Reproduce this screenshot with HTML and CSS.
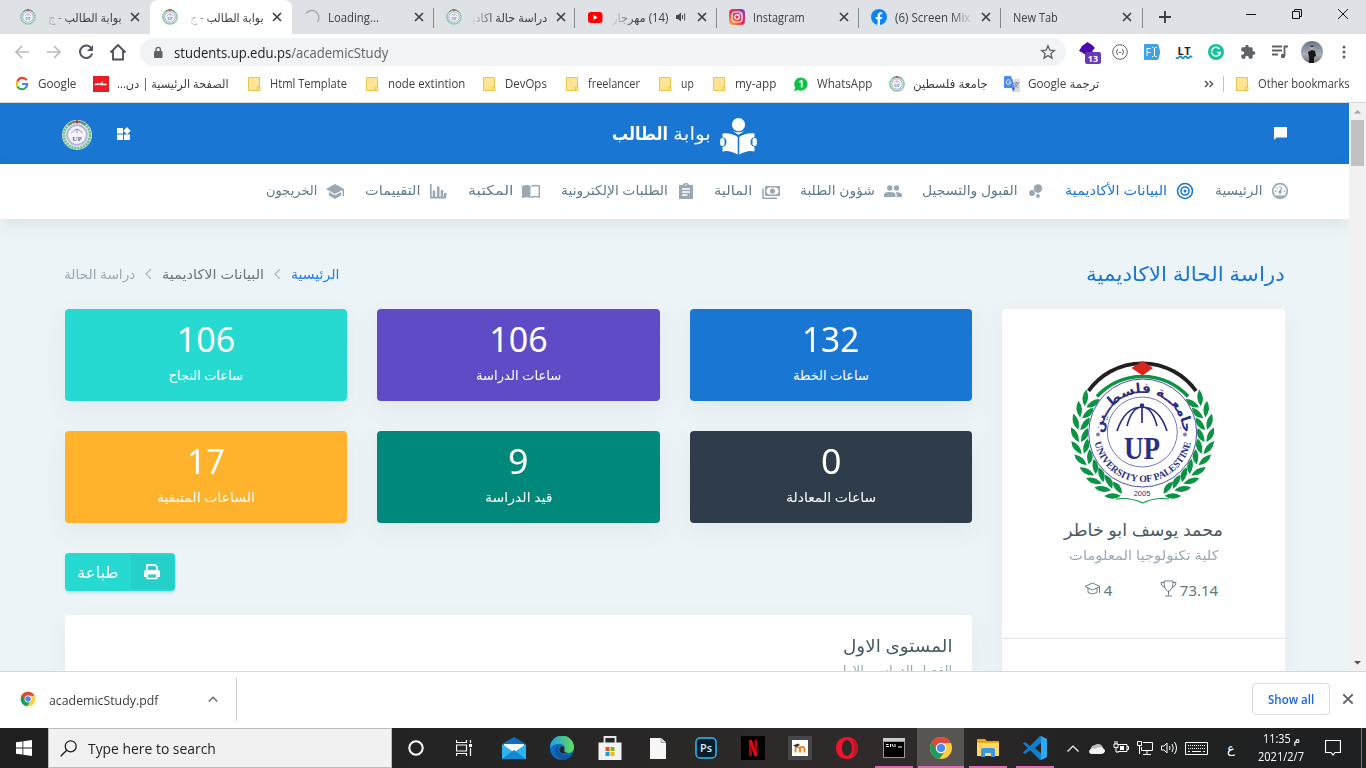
FILE: index.html
```html
<!DOCTYPE html>
<html lang="ar">
<head>
<meta charset="utf-8">
<title>بوابة الطالب</title>
<link rel="stylesheet" href="styles.css">
</head>
<body>
<svg class="defs" width="0" height="0">
  <symbol id="close" viewBox="0 0 12 12"><path d="M2 2l8 8M10 2l-8 8" stroke="currentColor" stroke-width="1.7" fill="none"/></symbol>
  <symbol id="folder" viewBox="0 0 16 16"><path d="M2.500 1.500h11v9.500h.5v3.500h-11.500z" fill="#ffe593" stroke="#e8c64b"/><path d="M11.500 14.500v-3.500h2" fill="none" stroke="#e8c64b"/></symbol>
  <symbol id="mini" viewBox="0 0 32 32"><circle cx="16" cy="16" r="16" fill="#e9edf0"/><circle cx="16" cy="16" r="14" fill="none" stroke="#6fc48c" stroke-width="3" stroke-dasharray="2.500 .7"/><path d="M7 5Q16-2 25 5" fill="none" stroke="#7a7474" stroke-width="2"/><path d="M14 2l2-2 2 2-2 2z" fill="#d4281e"/><circle cx="16" cy="16" r="10.500" fill="#f3f3fa" stroke="#b4b4d8" stroke-width="2"/><path d="M10 14q6-8 12 0M16 9v5" fill="none" stroke="#8a89c0"/><text x="16" y="22" text-anchor="middle" font-family="Liberation Serif" font-weight="bold" font-size="7.500" fill="#6665ad">UP</text></symbol>
  <symbol id="chrome" viewBox="0 0 24 24"><circle cx="12" cy="12" r="11" fill="#ffcd40"/><path d="M12 12L2.500 6.500A11 11 0 0 0 10.500 22.900L16.500 14z" fill="#1a9e5c"/><path d="M2.500 6.500A11 11 0 0 1 21.700 7H12L7.500 14.500z" fill="#db4a3b"/><circle cx="12" cy="12" r="5.200" fill="#fff"/><circle cx="12" cy="12" r="4.100" fill="#4a8af4"/></symbol>
</svg>

<div class="tabs">
  <div class="tab"><svg class="fav"><use href="#mini"/></svg><div class="lab rtl fadel"><span class="fit" dir="rtl" data-w="74">بوابة الطالب - ج</span></div><svg class="x"><use href="#close"/></svg></div>
  <div class="tab active"><svg class="fav"><use href="#mini"/></svg><div class="lab rtl fadel"><span class="fit" dir="rtl" data-w="74">بوابة الطالب - ج</span></div><svg class="x"><use href="#close"/></svg></div>
  <div class="tab sep"><svg class="fav" viewBox="0 0 16 16"><path d="M2 4.500A7 7 0 0 1 13.500 12.700" fill="none" stroke="#a9abad" stroke-width="1.600"/></svg><div class="lab"><span class="fit" data-w="51">Loading...</span></div><svg class="x"><use href="#close"/></svg></div>
  <div class="tab sep"><svg class="fav"><use href="#mini"/></svg><div class="lab rtl fadel"><span class="fit" dir="rtl" data-w="78">دراسة حالة اكاديـ</span></div><svg class="x"><use href="#close"/></svg></div>
  <div class="tab sep"><svg class="fav" viewBox="0 0 16 16"><rect x="1" y="3" width="14.500" height="11" rx="3" fill="#f00"/><path d="M6.500 6v5l4.300-2.500z" fill="#fff"/></svg><div class="lab short rtl fadel"><span class="fit" dir="rtl" data-w="56">(14) مهرجار</span></div><svg class="aud" viewBox="0 0 12 12"><path d="M1 4h2l3-2.500v9L3 8H1z" fill="#45494d"/><path d="M7.500 4v4M9.700 2.500v7" stroke="#45494d" fill="none"/></svg><svg class="x"><use href="#close"/></svg></div>
  <div class="tab sep"><svg class="fav" viewBox="0 0 16 16"><defs><linearGradient id="ig" x1="0" y1="1" x2="1" y2="0"><stop offset="0" stop-color="#fdb945"/><stop offset=".45" stop-color="#ee3344"/><stop offset="1" stop-color="#7b3bd0"/></linearGradient></defs><rect width="16" height="16" rx="4" fill="url(#ig)"/><rect x="3" y="3" width="10" height="10" rx="3" fill="none" stroke="#fff" stroke-width="1.200"/><circle cx="8" cy="8" r="2.300" fill="none" stroke="#fff" stroke-width="1.200"/><circle cx="11" cy="5" r=".7" fill="#fff"/></svg><div class="lab"><span class="fit" data-w="52">Instagram</span></div><svg class="x"><use href="#close"/></svg></div>
  <div class="tab sep"><svg class="fav" viewBox="0 0 16 16"><circle cx="8" cy="8" r="8" fill="#0b84f6"/><path d="M6.700 16v-5.800h-2V8h2V6.200c0-2 1.200-3 3-3l1.600.1v2h-1c-1 0-1.300.5-1.300 1.200V8h2.200l-.4 2.200H9V16z" fill="#fff"/></svg><div class="lab fader"><span class="fit" data-w="75">(6) Screen Mix</span></div><svg class="x"><use href="#close"/></svg></div>
  <div class="tab sep nofav"><div class="lab"><span class="fit" data-w="45">New Tab</span></div><svg class="x"><use href="#close"/></svg></div>
  <svg class="plus" viewBox="0 0 14 14"><path d="M7 1v12M1 7h12" stroke="#3c4043" stroke-width="1.900"/></svg>
  <div class="win">
    <svg viewBox="0 0 12 12"><path d="M1 6.500h10" stroke="#111"/></svg>
    <svg viewBox="0 0 12 12"><path d="M1.500 3.500h7v7h-7zM3.500 3.500v-2h7v7h-2" fill="none" stroke="#111"/></svg>
    <svg viewBox="0 0 12 12"><path d="M1 1l10 10M11 1L1 11" stroke="#111"/></svg>
  </div>
</div>

<div class="toolbar">
  <div class="cell"><svg width="16" height="16" viewBox="0 0 16 16"><path d="M15 8H2M8 2L2 8l6 6" fill="none" stroke="#b8babd" stroke-width="1.700"/></svg></div>
  <div class="cell"><svg width="16" height="16" viewBox="0 0 16 16"><path d="M1 8h13M8 2l6 6-6 6" fill="none" stroke="#b8babd" stroke-width="1.700"/></svg></div>
  <div class="cell"><svg width="16" height="16" viewBox="0 0 16 16"><path d="M13.500 4.500A6.200 6.200 0 1 0 14.200 9.500" fill="none" stroke="#55585c" stroke-width="2"/><path d="M15 1v6H9z" fill="#55585c"/></svg></div>
  <div class="cell"><svg width="18" height="18" viewBox="0 0 18 18"><path d="M1.500 9.500L9 2l7.500 7.500M4 8v8.500h10V8" fill="none" stroke="#4b4e52" stroke-width="1.800"/></svg></div>
  <div class="omni">
    <svg class="lock" viewBox="0 0 10 13"><rect x="1" y="5" width="8.500" height="7" rx="1" fill="#5f6368"/><path d="M3 5V3.500a2.200 2.200 0 0 1 4.400 0V5" fill="none" stroke="#5f6368" stroke-width="1.300"/></svg>
    <span class="fit url" data-w="214">students.up.edu.ps<i>/academicStudy</i></span>
    <svg class="star" viewBox="0 0 16 16"><path d="M8 1.700l1.800 4.400 4.700.4-3.600 3 1.100 4.600L8 11.600l-4 2.500 1.100-4.600-3.600-3 4.700-.4z" fill="none" stroke="#5f6368" stroke-width="1.300"/></svg>
  </div>
  <div class="cell"><svg width="28" height="26" viewBox="0 0 28 26"><path d="M13.500 3l6 4-1 1v7h-9V8L8 7z" fill="#4b0bae"/><path d="M8 7l-3 5 8 4 6-5 2-2-2-2z" fill="#4b0bae"/><rect x="11" y="13" width="16" height="12" rx="2" fill="#673ab7"/><text x="19" y="22.500" text-anchor="middle" font-family="Open Sans" font-size="9" font-weight="bold" fill="#fff">13</text></svg></div>
  <div class="cell"><svg width="16" height="16" viewBox="0 0 16 16"><circle cx="8" cy="8" r="7.300" fill="#fff" stroke="#666"/><path d="M6 5q-1 0-1 2 0 1-1 1 1 0 1 1 0 2 1 2M10 5q1 0 1 2 0 1 1 1-1 0-1 1 0 2-1 2M7 8.500h2" fill="none" stroke="#666"/></svg></div>
  <div class="cell"><svg width="16" height="16" viewBox="0 0 16 16"><path d="M1 0h12q1 0 1.500 1l1.500 6v2l-1.500 6q-.5 1-1.500 1H1q-1 0-1-1V1q0-1 1-1z" fill="#3fa2e6"/><text x="1.500" y="11.500" font-family="Open Sans" font-size="10" fill="#fff">F</text><path d="M8 3.500h1.500l1 1 1-1H13M8 12.500h1.500l1-1 1 1H13M10.500 4v8" fill="none" stroke="#fff"/></svg></div>
  <div class="cell"><svg width="18" height="18" viewBox="0 0 18 18"><text x="2.500" y="11.800" font-family="Open Sans" font-size="11" font-weight="bold" fill="#222" textLength="13">LT</text><path d="M1 14.300q1.500 2 3 0t2.600 0 2.600 0 2.600 0 2.600 0 2.600 0" fill="none" stroke="#1a8ad0" stroke-width="1.800"/></svg></div>
  <div class="cell"><svg width="16" height="16" viewBox="0 0 16 16"><circle cx="8" cy="8" r="8" fill="#15c39a"/><path d="M11.500 5A4.400 4.400 0 1 0 12.300 8.500H9M12.300 8.500l-1 3" fill="none" stroke="#fff" stroke-width="1.400"/></svg></div>
  <div class="cell"><svg width="16" height="16" viewBox="0 0 24 24"><path d="M20.500 11H19V7a2 2 0 0 0-2-2h-4V3.500a2.500 2.500 0 0 0-5 0V5H4a2 2 0 0 0-2 2v3.800h1.500a2.700 2.700 0 0 1 0 5.400H2V20a2 2 0 0 0 2 2h3.800v-1.500a2.700 2.700 0 0 1 5.400 0V22H17a2 2 0 0 0 2-2v-4h1.500a2.500 2.500 0 0 0 0-5z" fill="#5f6368"/></svg></div>
  <div class="cell"><svg width="16" height="14" viewBox="0 0 16 14"><path d="M0 1.500h10M0 5.500h10M0 9.500h6M12.500 11V1.500H16" fill="none" stroke="#5f6368" stroke-width="1.800"/><circle cx="11" cy="11" r="2.200" fill="#5f6368"/></svg></div>
  <div class="cell"><svg width="22" height="22" viewBox="0 0 22 22"><defs><linearGradient id="av" x2="0" y2="1"><stop offset="0" stop-color="#66738c"/><stop offset=".6" stop-color="#aaaeb8"/><stop offset="1" stop-color="#77706d"/></linearGradient></defs><circle cx="11" cy="11" r="11" fill="url(#av)"/><path d="M7 11l4-2 3 1 1 5-2 1v6H8v-6z" fill="#14171f"/><circle cx="11" cy="7" r="1.900" fill="#c9a58d"/><path d="M9 6q2-3 4 0z" fill="#222"/></svg></div>
  <div class="cell"><svg width="4" height="14" viewBox="0 0 4 14"><circle cx="2" cy="2" r="1.500" fill="#5f6368"/><circle cx="2" cy="7" r="1.500" fill="#5f6368"/><circle cx="2" cy="12" r="1.500" fill="#5f6368"/></svg></div>
</div>

<div class="marks">
  <div class="bm"><svg viewBox="0 0 16 16"><path d="M12.700 4.200A5.200 5.200 0 0 0 3.400 5.600" fill="none" stroke="#ea4335" stroke-width="2.200"/><path d="M3.400 5.600a5.200 5.200 0 0 0 0 4.800" fill="none" stroke="#fbbc05" stroke-width="2.200"/><path d="M3.400 10.400a5.200 5.200 0 0 0 8 1.600" fill="none" stroke="#34a853" stroke-width="2.200"/><path d="M8 8h5.200a5.200 5.200 0 0 1-1.800 4" fill="none" stroke="#4285f4" stroke-width="2.200"/></svg><span class="fit" data-w="38">Google</span></div>
  <div class="bm"><svg viewBox="0 0 16 16"><rect width="16" height="16" fill="#ed1c24"/><path d="M2 9q1-1.500 2.500-.5 1.500-1.500 3 0l1.500-1.500v1.500h4.500" fill="none" stroke="#fff" stroke-width="1.500"/></svg><span class="fit" dir="rtl" data-w="112">الصفحة الرئيسية | دن...</span></div>
  <div class="bm"><svg><use href="#folder"/></svg><span class="fit" data-w="77">Html Template</span></div>
  <div class="bm"><svg><use href="#folder"/></svg><span class="fit" data-w="77">node extintion</span></div>
  <div class="bm"><svg><use href="#folder"/></svg><span class="fit" data-w="42">DevOps</span></div>
  <div class="bm"><svg><use href="#folder"/></svg><span class="fit" data-w="52">freelancer</span></div>
  <div class="bm"><svg><use href="#folder"/></svg><span class="fit" data-w="13">up</span></div>
  <div class="bm"><svg><use href="#folder"/></svg><span class="fit" data-w="41">my-app</span></div>
  <div class="bm"><svg viewBox="0 0 16 16"><path d="M8 1.500A6.600 6.600 0 1 1 5 14l-4 1 1.200-3.500A6.600 6.600 0 0 1 8 1.500z" fill="#0dc143"/><path d="M6.300 6L8.700 4.800V11.500" fill="none" stroke="#fff" stroke-width="1.700"/></svg><span class="fit" data-w="55">WhatsApp</span></div>
  <div class="bm"><svg><use href="#mini"/></svg><span class="fit" dir="rtl" data-w="75">جامعة فلسطين</span></div>
  <div class="bm"><svg viewBox="0 0 16 16"><path d="M6 3h9q1 0 1 1v11q0 1-1 1H9z" fill="#dadce0"/><path d="M1 0h6l4 12H1q-1 0-1-1V1q0-1 1-1z" fill="#4a8af4"/><path d="M8 12h3l-2 4z" fill="#3367d6"/><path d="M6.200 4.500a2.300 2.300 0 1 0 .6 1.700H4.800" fill="none" stroke="#fff"/><path d="M10 7h5M12.500 6v1M14 7q-1 3-3 4M11 8q1 2 3 4" stroke="#777" stroke-width=".8" fill="none"/></svg><span class="fit" dir="rtl" data-w="71">ترجمة Google</span></div>
  <svg class="more" viewBox="0 0 10 8"><path d="M1 1l3 3-3 3M5.500 1l3 3-3 3" fill="none" stroke="#55585c" stroke-width="1.500"/></svg>
  <div class="vline"></div>
  <div class="bm"><svg><use href="#folder"/></svg><span class="fit" data-w="92">Other bookmarks</span></div>
</div>

<div class="view">
<div class="page" dir="rtl">
  <div class="top">
    <svg width="13" height="13" viewBox="0 0 13 13"><path d="M0 0h13v10.500H2.500L0 13z" fill="#fff"/></svg>
    <div class="brand">
      <svg width="37" height="37" viewBox="0 0 37 37"><circle cx="18.500" cy="6.700" r="6.600" fill="#fff"/><path d="M12.500 13q6 2.500 12 0l-6 3.700zM17.700 19v17.500Q9 31.500 2.500 33.500V29q4-1 4-5t-4-4.800V15.500Q11 14.500 17.700 19zM19.300 19v17.500Q28 31.500 34.500 33.500V29q-4-1-4-5t4-4.800V15.500Q26 14.500 19.300 19z" fill="#fff"/><rect x=".2" y="20" width="4.300" height="8" rx="2" fill="#fff"/><rect x="32.500" y="20" width="4.300" height="8" rx="2" fill="#fff"/></svg>
      <span class="fit b1" dir="rtl" data-w="38">بوابة</span>
      <span class="fit b2" dir="rtl" data-w="56">الطالب</span>
    </div>
    <div class="user">
      <svg width="14" height="14" viewBox="0 0 14 14"><path d="M0 1h6v5.500H0zM0 7.500h6V13H0zM7 7.500h6V13H7zM10 0l3.700 3.700L10 7.400 6.300 3.700z" fill="#fff"/></svg>
      <svg width="30" height="30"><use href="#mini"/></svg>
    </div>
  </div>
  <div class="nav">
    <div class="ni"><svg viewBox="0 0 18 18"><circle cx="9" cy="9" r="7.300" fill="none" stroke="#98a9b3" stroke-width="1.700"/><path d="M4 13.500h10l-2 2H6z" fill="#98a9b3"/><circle cx="9" cy="10" r="1.700" fill="#98a9b3"/><path d="M9 10l2-5M4 9h1.500M5.500 5.500l1 1M9 4v1.200M12.700 9H14" stroke="#98a9b3" stroke-width="1.300"/></svg><span class="fit" dir="rtl" data-w="48">الرئيسية</span></div>
    <div class="ni on"><svg viewBox="0 0 18 18"><circle cx="9" cy="9" r="7.500" fill="none" stroke="#1976d2" stroke-width="1.600"/><circle cx="9" cy="9" r="4" fill="none" stroke="#1976d2" stroke-width="1.600"/><circle cx="9" cy="9" r="1.500" fill="#1976d2"/></svg><span class="fit" dir="rtl" data-w="102">البيانات الأكاديمية</span></div>
    <div class="ni"><svg viewBox="0 0 18 18"><g fill="#98a9b3"><circle cx="11" cy="6.500" r="4.200"/><circle cx="5" cy="11" r="2.900"/><circle cx="11" cy="14" r="1.900"/></g></svg><span class="fit" dir="rtl" data-w="96">القبول والتسجيل</span></div>
    <div class="ni"><svg viewBox="0 0 18 18"><g fill="#98a9b3"><circle cx="5.800" cy="6" r="2.700"/><circle cx="12.500" cy="6" r="2.700"/><path d="M0 15v-2.200C0 10.700 3 10 5.800 10s5.700.7 5.700 2.800V15zM12.700 15v-2c0-1.200-.6-2.100-1.500-2.800 3-.3 6.800.4 6.800 2.600V15z"/></g></svg><span class="fit" dir="rtl" data-w="75">شؤون الطلبة</span></div>
    <div class="ni"><svg viewBox="0 0 18 18"><path d="M3.700 4.700h13.500v8.500H3.700zM1 6.500v9.700h14" fill="none" stroke="#98a9b3" stroke-width="1.500"/><circle cx="10.500" cy="9" r="2.600" fill="#98a9b3"/><path d="M4 5h3L4 8zM17 5h-3l3 3zM4 13h3l-3-3zM17 13h-3l3-3z" fill="#98a9b3"/></svg><span class="fit" dir="rtl" data-w="38">المالية</span></div>
    <div class="ni"><svg viewBox="0 0 18 18"><path d="M2 3h4q0-2 3-2t3 2h4v14H2z" fill="#98a9b3"/><path d="M5 7h8M5 10h8M5 13h5.500" stroke="#fff" stroke-width="1.400"/><circle cx="9" cy="3" r=".8" fill="#fff"/></svg><span class="fit" dir="rtl" data-w="107">الطلبات الإلكترونية</span></div>
    <div class="ni"><svg viewBox="0 0 18 18"><path d="M0 4q5-2 8.500 0v12Q5 14.500 0 16z" fill="#98a9b3"/><path d="M9.300 4.200Q13 2.700 17.300 4v11Q13 13.700 9 15.500" fill="none" stroke="#98a9b3" stroke-width="1.500"/></svg><span class="fit" dir="rtl" data-w="46">المكتبة</span></div>
    <div class="ni"><svg viewBox="0 0 18 18"><path d="M1.800 2v13.700H17" fill="none" stroke="#98a9b3" stroke-width="1.700"/><path d="M5 15V8.500M9.200 15V4.500M13 15V8M16.200 15v-4" fill="none" stroke="#98a9b3" stroke-width="2.500"/></svg><span class="fit" dir="rtl" data-w="56">التقييمات</span></div>
    <div class="ni"><svg viewBox="0 0 18 18"><path d="M9 2l9 5-9 5-9-5zM3 10l6 3.300L15 10v3.500L9 17l-6-3.500zM16.500 7H18v7h-1.500z" fill="#98a9b3"/></svg><span class="fit" dir="rtl" data-w="51">الخريجون</span></div>
  </div>
  <div class="content">
    <div class="heading">
      <span class="fit title" dir="rtl" data-w="199">دراسة الحالة الاكاديمية</span>
      <div class="crumbs">
        <span class="fit c1" dir="rtl" data-w="49">الرئيسية</span>
        <svg viewBox="0 0 7 10"><path d="M6 0L1 5l5 5" fill="none" stroke="#a6b7bf" stroke-width="1.200"/></svg>
        <span class="fit c2" dir="rtl" data-w="102">البيانات الاكاديمية</span>
        <svg viewBox="0 0 7 10"><path d="M6 0L1 5l5 5" fill="none" stroke="#a6b7bf" stroke-width="1.200"/></svg>
        <span class="fit c3" dir="rtl" data-w="71">دراسة الحالة</span>
      </div>
    </div>
    <div class="cols">
      <div class="profile">
        <svg class="emblem" viewBox="0 0 143 143">
          <defs>
            <g id="leaf"><path d="M-1 8Q-11 4-8-6-1-2-1 8ZM1 8Q10 3 8.500-7 0-2 1 8Z" fill="#0b9444"/></g>
            <g id="branch">
              <use href="#leaf" transform="rotate(-32) translate(62.500)"/><use href="#leaf" transform="rotate(-21) translate(63)"/><use href="#leaf" transform="rotate(-10) translate(63)"/><use href="#leaf" transform="rotate(1) translate(63)"/><use href="#leaf" transform="rotate(12) translate(63)"/><use href="#leaf" transform="rotate(23) translate(63)"/><use href="#leaf" transform="rotate(34) translate(63)"/><use href="#leaf" transform="rotate(44) translate(63.500)"/><use href="#leaf" transform="rotate(54) translate(64)"/><use href="#leaf" transform="rotate(64) translate(65)"/>
            </g>
            <path id="low" d="M22.700 72a49 49 0 0 0 98 0"/>
            <path id="high" d="M31.700 72a40 40 0 0 1 80 0"/>
          </defs>
          <path d="M17.500 30A66 66 0 0 1 125 30" fill="none" stroke="#231f20" stroke-width="3.800"/>
          <path d="M26 35.500A61.700 61.700 0 0 1 117 35.500" fill="none" stroke="#0b9444" stroke-width="3.600"/>
          <path d="M71.500 0l10.500 7-10.500 7.500L60.500 7z" fill="#da251c"/>
          <g transform="translate(71.700 72)"><use href="#branch"/><use href="#branch" transform="scale(-1 1)"/></g>
          <path d="M45 138q14-2 26.700 4Q84 136 98 138" fill="none" stroke="#0b9444" stroke-width="1.200"/>
          <circle cx="71.700" cy="72" r="54" fill="#fff" stroke="#5452a0" stroke-width="1"/>
          <circle cx="71.300" cy="71" r="35" fill="none" stroke="#6967ae" stroke-width=".9"/>
          <path d="M46 70q8-24 25-24t25 24M56 65q5-19 15-19t15 19M71 44v18" fill="none" stroke="#2b2e83" stroke-width="1.700"/><circle cx="71" cy="44.500" r="2.200" fill="#2b2e83"/>
          <text class="uni up" x="71" y="97.500" text-anchor="middle" textLength="36" lengthAdjust="spacingAndGlyphs">UP</text>
          <text class="uni eng" text-anchor="middle"><textPath href="#low" startOffset="50%">UNIVERSITY OF PALESTINE</textPath></text>
          <text class="uni arb" text-anchor="middle"><textPath href="#high" startOffset="50%">جامعــة فلسطــين</textPath></text>
          <circle cx="27" cy="73.500" r="2" fill="#7f7dba"/><circle cx="114" cy="73.500" r="2" fill="#7f7dba"/>
          <text class="yr" x="71" y="135" text-anchor="middle">2005</text>
        </svg>
        <span class="fit pname" dir="rtl" data-w="159">محمد يوسف ابو خاطر</span>
        <span class="fit pfac" dir="rtl" data-w="150">كلية تكنولوجيا المعلومات</span>
        <div class="stats">
          <div><span class="fit" data-w="38" dir="ltr">73.14</span><svg viewBox="0 0 17 17"><path d="M4 1h9q0 8-3.500 10h-2Q4 9 4 1zM8.500 11v4.500M5 16h7M4 2.500H1q0 4 4 5M13 2.500h3q0 4-4 5" fill="none" stroke="#6b7f8b"/></svg></div>
          <div><span class="fit" data-w="9" dir="ltr">4</span><svg viewBox="0 0 17 17"><path d="M1 6.500L8.500 3 16 6.500 8.500 10zM4 8v4.500q4.500 3 9 0V8M15.500 7v6" fill="none" stroke="#6b7f8b"/></svg></div>
        </div>
        <div class="line"></div>
      </div>
      <div class="main">
        <div class="cards">
          <div class="card blue"><span class="fit num" dir="ltr" data-w="57">132</span><span class="fit cl" dir="rtl" data-w="76">ساعات الخطة</span></div>
          <div class="card violet"><span class="fit num" dir="ltr" data-w="58">106</span><span class="fit cl" dir="rtl" data-w="85">ساعات الدراسة</span></div>
          <div class="card cyan"><span class="fit num" dir="ltr" data-w="58">106</span><span class="fit cl" dir="rtl" data-w="74">ساعات النجاح</span></div>
          <div class="card dark"><span class="fit num" dir="ltr" data-w="20">0</span><span class="fit cl" dir="rtl" data-w="90">ساعات المعادلة</span></div>
          <div class="card green"><span class="fit num" dir="ltr" data-w="20">9</span><span class="fit cl" dir="rtl" data-w="68">قيد الدراسة</span></div>
          <div class="card amber"><span class="fit num" dir="ltr" data-w="38">17</span><span class="fit cl" dir="rtl" data-w="98">الساعات المتبقية</span></div>
        </div>
        <div class="print"><div class="pi"><svg width="16" height="16" viewBox="0 0 16 16"><path d="M3 6.500V1h8l2 2v3.500" fill="none" stroke="#fff" stroke-width="1.800"/><path d="M0 13V8q0-2 2-2h12q2 0 2 2v5h-2.500v-2.500h-11V13z" fill="#fff"/><path d="M3.300 10.500v4h9.400v-4" fill="none" stroke="#fff" stroke-width="1.700"/></svg></div><div class="pt"><span class="fit" dir="rtl" data-w="42">طباعة</span></div></div>
        <div class="panel"><span class="fit lvl" dir="rtl" data-w="110">المستوى الاول</span><span class="fit sem" dir="rtl" data-w="115">الفصل الدراسي الاول</span></div>
      </div>
    </div>
  </div>
</div>
<div class="scroll"><svg viewBox="0 0 17 17"><path d="M5 10.500h7L8.500 7z" fill="#a0a0a0"/></svg><div class="thumb"></div><svg class="dn" viewBox="0 0 17 17"><path d="M5 7h7l-3.500 3.500z" fill="#505050"/></svg></div>
</div>

<div class="shelf">
  <svg class="dc"><use href="#chrome"/></svg>
  <span class="fit fn" data-w="109">academicStudy.pdf</span>
  <svg class="chev" viewBox="0 0 10 6"><path d="M.7 5.500L5 1.200l4.300 4.300" fill="none" stroke="#6b6e72" stroke-width="1.500"/></svg>
  <div class="sl"></div>
  <div class="all"><span class="fit" data-w="46">Show all</span></div>
  <svg class="sx"><use href="#close"/></svg>
</div>

<div class="task">
  <div class="tk w48"><svg width="16" height="16" viewBox="0 0 16 16"><path d="M0 2.300l6.500-.9v6.200H0zM7.300 1.300L16 0v7.600H7.300zM0 8.400h6.500v6.200L0 13.700zM7.300 8.400H16V16l-8.700-1.300z" fill="#fff"/></svg></div>
  <div class="search"><svg width="17" height="17" viewBox="0 0 17 17"><circle cx="10.700" cy="6.300" r="5.500" fill="none" stroke="#222" stroke-width="1.300"/><path d="M6.700 10.300L.7 16.300" stroke="#222" stroke-width="1.400"/></svg><span class="fit" data-w="128">Type here to search</span></div>
  <div class="tk w48"><svg width="16" height="16" viewBox="0 0 16 16"><circle cx="8" cy="8" r="6.700" fill="none" stroke="#fff" stroke-width="2"/></svg></div>
  <div class="tk w50"><svg width="17" height="16" viewBox="0 0 17 16"><path d="M.5 0v2.500h10V0M.5 16v-2.500h10V16M.5 5h10v6H.5zM14.500 0v3M14.500 8v8" fill="none" stroke="#fff" stroke-width="1.200"/><path d="M13 4h3v3h-3z" fill="#fff"/></svg></div>
  <div class="tk w48"><svg width="24" height="22" viewBox="0 0 24 22"><path d="M0 7L12 0l12 7v3H0z" fill="#0f6cbd"/><path d="M2 7h20v9H2z" fill="#f4f6f8"/><path d="M0 7l12 8.500L24 7v15H0z" fill="#2fb3ee"/><path d="M0 22l12-9 12 9z" fill="#1488d0"/></svg></div>
  <div class="tk w48"><svg width="24" height="24" viewBox="0 0 24 24"><defs><linearGradient id="eg" x2="1"><stop offset="0" stop-color="#1d9fe8"/><stop offset="1" stop-color="#63dc57"/></linearGradient></defs><circle cx="12" cy="12" r="12" fill="#0d6fc4"/><path d="M0 12A12 12 0 0 1 24 11c0 4-3 6-6 6-4 0-5-2-3.500-4C16 9 8 4 0 12z" fill="url(#eg)"/><path d="M8 12c0 6 5 9 14 6 1 0 .5 1-1 2.500Q17 24 12 24 5 22 5 15q0-5 5-6-2 1-2 3z" fill="#1254a0"/><path d="M10.500 10.500q-3 4 1.500 7l11.500-.5.500-1q-2 1.500-6 1-4 0-3.800-3 .8-2-.5-3.500z" fill="#262525"/></svg></div>
  <div class="tk w48"><svg width="24" height="24" viewBox="0 0 24 24"><path d="M6.500 8V1h11v7" fill="none" stroke="#e8e8e8" stroke-width="1.800"/><path d="M.5 6.500h23V24H.5z" fill="#f3f3f3"/><path d="M7.500 11h4v4h-4z" fill="#f25022"/><path d="M12.500 11h4v4h-4z" fill="#7fba00"/><path d="M7.500 16h4v4h-4z" fill="#00a4ef"/><path d="M12.500 16h4v4h-4z" fill="#ffb900"/></svg></div>
  <div class="tk w48"><svg width="16" height="21" viewBox="0 0 16 21"><path d="M0 0h11l5 4.500V21H0z" fill="#f7f7f7"/><path d="M11 0v4.500h5" fill="#ddd" stroke="#888" stroke-width=".7"/></svg></div>
  <div class="tk"><svg width="22" height="22" viewBox="0 0 22 22"><rect x="1" y="1" width="20" height="20" rx="4" fill="#061e2b" stroke="#31b8f4" stroke-width="1.500"/><text x="11" y="15" text-anchor="middle" font-family="Open Sans" font-size="11" font-weight="600" fill="#d6f1ff">Ps</text></svg></div>
  <div class="tk"><svg width="24" height="24" viewBox="0 0 24 24"><path d="M0 0h24v24H0z" fill="#000"/><path d="M8 4h2.800v16H8zM13.400 4h2.800v16h-2.800z" fill="#b20710"/><path d="M8 4h2.800l5.400 16h-2.800z" fill="#e50914"/></svg></div>
  <div class="tk"><svg width="24" height="24" viewBox="0 0 24 24"><path d="M0 0h24v24H0z" fill="#46474a"/><path d="M4 4h16v16H4z" fill="#fff"/><path d="M7.500 16.500V13q0-2 2-2t2.500 2v3.500M12 16.500V13q0-2 2.300-2t2.200 2v3.500" fill="none" stroke="#f58220" stroke-width="1.900"/><path d="M5 9.500L10 7.500l2 1.500-4 2z" fill="#333"/></svg></div>
  <div class="tk"><svg width="24" height="24" viewBox="0 0 24 24"><path fill-rule="evenodd" d="M12 1C5 1 1 6 1 12s4 11 11 11 11-5 11-11S19 1 12 1zm0 3c3 0 5 4 5 8s-2 8-5 8-5-4-5-8 2-8 5-8z" fill="#f0142d"/><path d="M15 3q4 0 4 9t-4 9q8-1 8-9t-8-9z" fill="#b8162a"/></svg></div>
  <div class="tk open"><svg width="22" height="20" viewBox="0 0 22 20"><path d="M0 0h22v20H0z" fill="#999"/><path d="M1 4h20v15H1z" fill="#000"/><path d="M0 0h22v3H0z" fill="#ccc"/><path d="M3 6.500h2.500M3 8.500h3M7.500 6v3M9 6l1.500 3M12 6v3M15 9h4" stroke="#fff"/></svg></div>
  <div class="tk open cur"><svg width="24" height="24"><use href="#chrome"/></svg></div>
  <div class="tk open"><svg width="22" height="20" viewBox="0 0 22 20"><path d="M0 1h8l2 2h12v5H0z" fill="#e9a90d"/><path d="M0 5h22v13H0z" fill="#ffd867"/><path d="M4 19v-7q0-2 2-2h10q2 0 2 2v7h-4v-4H8v4z" fill="#3a96dd"/></svg></div>
  <div class="tk open"><svg width="24" height="24" viewBox="0 0 24 24"><path d="M17 0l7 3v18l-7 3L7 14l-5 4-2-1.500 5-4.500-5-4.500L2 6l5 4zM18 7l-6.500 5 6.500 5z" fill="#0e7fd0" fill-rule="evenodd"/><path d="M18 0l6 3v18l-6 3z" fill="#31a7f2"/></svg></div>
  <div class="tray">
    <div><svg width="12" height="7" viewBox="0 0 12 7"><path d="M.5 6.500L6 1l5.500 5.500" fill="none" stroke="#fff" stroke-width="1.200"/></svg></div>
    <div><svg width="16" height="12" viewBox="0 0 16 12"><path d="M2 8a4 4 0 0 1 4-5 5 5 0 0 1 8 3q2 1 2 3-1 2-3 2H3q-3-1-1-3z" fill="#bdbdbd"/><path d="M0 9q2-4 6-2l4-2q4 0 6 4-1 3-4 3H3Q0 12 0 9z" fill="#f4f4f4"/></svg></div>
    <div><svg width="16" height="14" viewBox="0 0 16 14"><path d="M5 3.500h9v7H5M14 5.500h1.500v3H14M1 3v3.500h4V3zM2 0v3M4 0v3M3 7v4h3" fill="none" stroke="#fff"/><path d="M7 5h4v4H7z" fill="#fff"/></svg></div>
    <div><svg width="16" height="14" viewBox="0 0 16 14"><path d="M6 1.500h9.500v8h-11V6M10 9.500v4M6 13.500h8M.5.500h4v4h-4zM2.500 5v8" fill="none" stroke="#fff"/></svg></div>
    <div><svg width="17" height="14" viewBox="0 0 17 14"><path d="M.5 5h2.500l3-3v10L3 9H.5zM8.500 5q1 2 0 4M11 3q2.500 4 0 8M13.500 1q4 6 0 12" fill="none" stroke="#fff"/></svg></div>
    <div class="kb"><svg width="23" height="13" viewBox="0 0 23 13"><path d="M.5.500h22v12H.5z" fill="none" stroke="#fff"/><path d="M3 3.500h17M3 6.500h17" stroke="#fff" stroke-dasharray="1 1"/><path d="M3 9.500h2M7 9.500h9M18 9.500h2" stroke="#fff"/></svg></div>
    <div class="lang">ع</div>
    <div class="clock"><span class="fit" dir="ltr" data-w="37">11:35 م</span><span class="fit" dir="ltr" data-w="46">2021/2/7</span></div>
    <div class="act"><svg width="16" height="16" viewBox="0 0 16 16"><path d="M.5.500h15v12H10l-2 2.500-2-2.500H.5z" fill="none" stroke="#fff" stroke-width="1.200"/></svg></div>
    <div class="peek"></div>
  </div>
</div>
<script src="fit.js"></script>
</body>
</html>
```
FILE: styles.css
```css
* { box-sizing: border-box; }
body { margin: 0; width: 1366px; height: 768px; overflow: hidden; display: flex; flex-direction: column; font-family: "Open Sans", "DejaVu Sans", sans-serif; font-size: 12px; color: #3c4043; background: #fff; }
svg { display: block; flex: none; }
.defs { position: absolute; }
.fit { display: block; flex: none; white-space: nowrap; }
.fit > span { display: inline-block; transform-origin: 0 50%; }
.fit[dir="rtl"] > span { transform-origin: 100% 50%; }

/* tab strip */
.tabs { height: 34px; flex: none; background: #dee1e6; display: flex; padding-left: 8px; }
.tab { width: 141.850px; height: 34px; display: flex; align-items: center; padding-left: 12px; flex: none; }
.tab.active { background: #fff; border-radius: 8px 8px 0 0; }
.tab.sep { background: linear-gradient(#85888c, #85888c) right 8px / 1px 20px no-repeat; }
.nofav { padding-left: 12px; }
.fav { width: 16px; height: 16px; }
.lab { width: 78px; margin-left: 8px; overflow: hidden; display: flex; }
.tab.nofav .lab { margin-left: 0; width: 101px; }
.lab.short { width: 57px; }
.rtl { justify-content: flex-end; }
.fadel { mask-image: linear-gradient(to right, transparent, #000 26px); }
.fader { mask-image: linear-gradient(to left, transparent, #000 22px); }
.aud { width: 12px; height: 12px; margin: 0 2px 0 7px; }
.x { width: 12px; height: 12px; margin-left: 7px; color: #3c4043; }
.plus { width: 14px; height: 14px; margin: 10px 0 0 15px; }
.win { margin-left: auto; display: flex; gap: 34px; padding: 8px 17px 0 0; }
.win svg { width: 12px; height: 12px; }

/* toolbar */
.toolbar { height: 36px; flex: none; display: flex; align-items: center; padding-left: 6px; }
.cell { width: 32px; height: 32px; display: flex; align-items: center; justify-content: center; flex: none; }
.omni { width: 926px; height: 28px; margin: 0 6px; border-radius: 14px; background: #f1f3f4; display: flex; align-items: center; padding: 0 10px 0 13px; }
.lock { width: 10px; height: 13px; margin-right: 11px; }
.url { font-size: 14px; color: #202124; }
.url i { font-style: normal; color: #5f6368; }
.star { width: 16px; height: 16px; margin-left: auto; }

/* bookmarks */
.marks { height: 33px; flex: none; display: flex; align-items: center; gap: 16.850px; padding: 0 0 5px 14px; border-bottom: 1px solid #d5d9dd; }
.bm { display: flex; gap: 8px; align-items: center; }
.bm svg { width: 16px; height: 16px; }
.more { width: 10px; height: 8px; margin-left: 88px; }
.vline { width: 1px; height: 16px; background: #c4c7ca; margin: 0 -7px 0 -8px; }

/* web page */
.view { height: 568px; flex: none; display: flex; overflow: hidden; }
.page { width: 1349px; flex: none; background: #ecf4f7; overflow: hidden; font-family: "Noto Sans", "DejaVu Sans", sans-serif; color: #67757c; }
.top { height: 61px; background: #1976d2; display: grid; grid-template-columns: 530px 145px 1fr; align-items: center; padding: 0 62px; }
.brand { display: flex; align-items: center; color: #fff; font-size: 18px; height: 37px; margin-top: 5px; }
.brand svg { margin-left: 9px; }
.b2 { font-weight: bold; margin-right: 5px; }
.brand .fit { margin-top: -6px; }
.user { display: flex; justify-content: flex-end; align-items: center; gap: 25px; }
.user svg:last-child { margin-top: 3px; }
.nav { height: 55px; background: #fff; box-shadow: 0 5px 18px rgba(75, 85, 95, .11); position: relative; display: flex; gap: 20.100px; padding: 0 60px 2px 0; align-items: center; }
.ni { display: flex; align-items: center; gap: 9px; color: #607d8b; font-size: 13.500px; }
.ni svg { width: 18px; height: 18px; }
.ni .fit { margin-top: -2px; }
.on { color: #1976d2; }
.content { padding: 35px 64.400px 0 64.600px; }
.heading { height: 39px; display: flex; justify-content: space-between; align-items: center; }
.title { font-size: 20px; color: #1976d2; }
.crumbs { display: flex; align-items: center; font-size: 13.500px; }
.crumbs svg { width: 7px; height: 10px; margin: 0 9.700px; }
.c1 { color: #1d7bf5; }
.c3 { color: #99abb4; }
.cols { display: grid; grid-template-columns: 282.500px 1fr; gap: 30px; margin-top: 16px; }
.profile, .panel { background: #fff; border-radius: 4px; box-shadow: 0 8px 24px rgba(80, 90, 110, .06); }
.profile { height: 400px; padding-top: 52px; display: flex; flex-direction: column; align-items: center; }
.emblem { width: 143px; height: 143px; direction: ltr; margin-right: 1px; }
.uni { font-family: "Liberation Serif", serif; font-weight: bold; fill: #2b2e83; }
.up { font-size: 32px; }
.eng { font-size: 9.800px; }
.arb { font-family: "DejaVu Sans", sans-serif; font-size: 14px; }
.yr { font: 7.500px "Liberation Sans", sans-serif; fill: #2b2e83; }
.pname { font-size: 17.500px; line-height: 24px; margin-top: 13px; color: #4b5a62; }
.pfac { font-size: 13.500px; line-height: 20px; margin-top: 4px; color: #99abb4; }
.stats { display: flex; gap: 47px; margin-top: 15px; padding-left: 15px; font-size: 15px; line-height: 20px; }
.stats div { display: flex; align-items: center; gap: 3px; }
.stats svg { width: 17px; height: 17px; margin-top: -3px; }
.line { align-self: stretch; height: 1px; background: #e3e6e8; margin-top: 38px; }
.cards { display: grid; grid-template-columns: repeat(3, 282.500px); gap: 30px; }
.card { height: 92px; border-radius: 4px; box-shadow: 0 8px 24px rgba(80, 90, 110, .07); color: #fff; display: flex; flex-direction: column; align-items: center; }
.num { font-size: 34px; line-height: 46px; margin-top: 7px; }
.cl { font-size: 13px; line-height: 20px; margin-top: 3px; }
.blue { background: #1976d2; }
.violet { background: #5e4bc5; }
.cyan { background: #26dad2; }
.dark { background: #2f3d4a; }
.green { background: #00897b; }
.amber { background: #ffb22b; }
.print { width: 110px; height: 38px; margin: 30px auto 0 0; border-radius: 4px; background: #26dad2; box-shadow: 0 2px 3px rgba(38, 160, 160, .25); color: #fff; display: flex; padding: 2px 1px; font-size: 16px; }
.pi { width: 43px; background: #24d0c9; display: flex; align-items: center; justify-content: center; }
.pt { flex: 1; display: flex; align-items: center; padding-right: 12px; }
.panel { height: 200px; margin-top: 24px; padding: 17px 20px; color: #455a64; }
.lvl { font-size: 17.500px; line-height: 26px; }
.sem { font-size: 13.500px; line-height: 20px; color: #99abb4; margin-top: 2px; }
.scroll { width: 17px; background: #f1f1f1; display: flex; flex-direction: column; }
.scroll svg { width: 17px; height: 17px; }
.thumb { width: 13px; height: 46px; margin: 0 2px; background: #c1c1c1; }
.dn { margin-top: auto; }

/* download shelf */
.shelf { height: 57px; flex: none; border-top: 1px solid #d5d8db; display: flex; align-items: center; padding: 0 12px 2px 20px; background: #fff; }
.dc { width: 16px; height: 16px; margin-right: 13px; }
.fn { font-size: 13px; margin-top: 2px; }
.chev { width: 10px; height: 6px; margin-left: 50px; }
.sl { width: 1px; height: 43px; margin-left: 18px; background: #cfcfcf; }
.all { width: 78px; height: 32px; margin-left: auto; border: 1px solid #d8dbdf; border-radius: 4px; display: flex; align-items: center; justify-content: center; color: #1a65e0; font-weight: 600; }
.sx { width: 14px; height: 14px; margin-left: 11px; margin-right: -1px; color: #5f6368; }

/* taskbar */
.task { height: 40px; flex: none; background: linear-gradient(to right, #1f1f1f, #262525 40%, #302b2a 65%, #222 80%, #1e2021); display: flex; color: #fff; }
.tk { width: 47px; height: 40px; flex: none; display: flex; align-items: center; justify-content: center; }
.w48 { width: 48px; }
.w50 { width: 50px; padding-right: 2px; }
.open { background: linear-gradient(#e568b4, #e568b4) center bottom / 38px 2px no-repeat; }
.cur { background: linear-gradient(#e568b4, #e568b4) center bottom / 46px 2px no-repeat, #575452; }
.search { width: 344px; flex: none; background: #f1f1f1; border: 1px solid #bcbcbc; display: flex; align-items: center; padding-left: 11px; gap: 11px; font-size: 14px; color: #222; }
.tray { display: flex; margin-left: 3px; }
.tray > div { width: 24px; display: flex; align-items: center; justify-content: center; }
.tray .kb { width: 31px; }
.tray .lang { width: 38px; font-size: 13px; }
.tray .clock { width: 62px; flex-direction: column; line-height: 18px; font-size: 12px; }
.tray .act { width: 42px; }
.tray .peek { width: 1px; background: #77797a; margin-left: 7px; }
```
FILE: fit.js
```js
for (const el of document.querySelectorAll('.fit')) {
  const inner = document.createElement('span');
  while (el.firstChild) inner.appendChild(el.firstChild);
  el.appendChild(inner);
  const want = Number(el.dataset.w);
  inner.style.transform = 'scaleX(' + want / inner.offsetWidth + ')';
  el.style.width = want + 'px';
}
```
